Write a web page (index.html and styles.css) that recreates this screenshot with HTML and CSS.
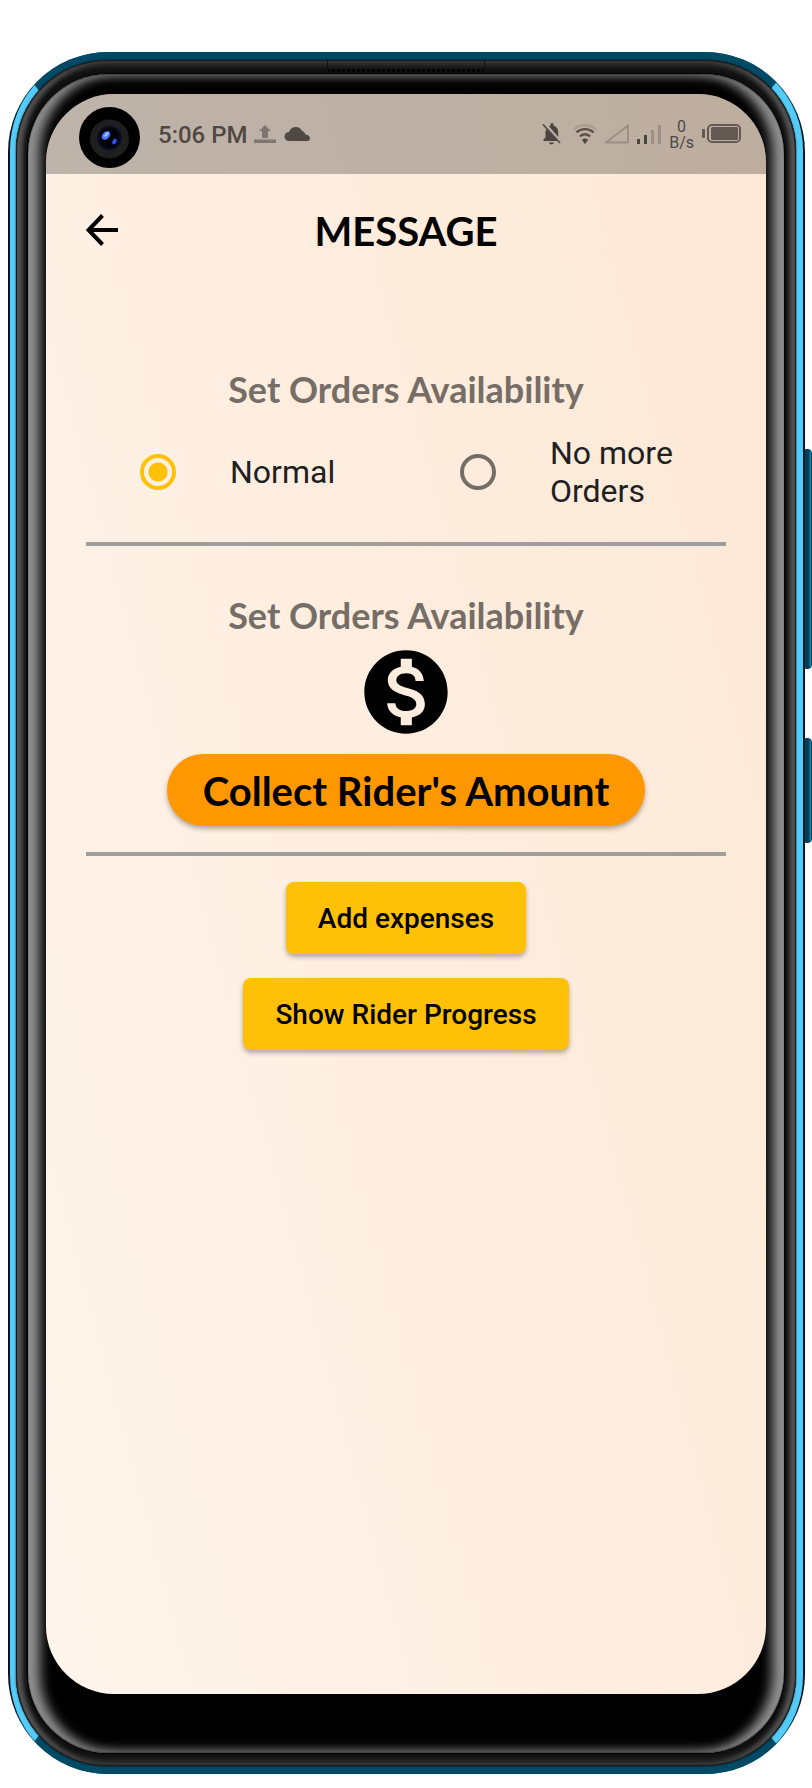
FILE: index.html
```html
<!DOCTYPE html>
<html lang="en">
<head>
<meta charset="utf-8">
<meta name="viewport" content="width=device-width, initial-scale=1">
<title>Message</title>
<link rel="stylesheet" href="styles.css">
</head>
<body>
<div class="phone">
  <span class="side-button volume"></span>
  <span class="side-button power"></span>
  <div class="rim">
  <div class="frame">
    <span class="speaker"></span>
    <div class="bezel">
      <div class="screen">
        <header class="status-bar">
          <svg class="camera" viewBox="0 0 61 61" aria-hidden="true">
            <defs>
              <radialGradient id="lens"><stop offset="0" stop-color="#000"/><stop offset=".7" stop-color="#020208"/><stop offset="1" stop-color="#10102c"/></radialGradient>
            </defs>
            <circle cx="30.500" cy="30.500" r="30.500" fill="#000"/>
            <circle cx="30.500" cy="32" r="19.500" fill="#1f1f1f"/>
            <circle cx="30.500" cy="31" r="12.500" fill="url(#lens)"/>
            <ellipse cx="27" cy="28.500" rx="3.500" ry="5" transform="rotate(45 27 28.500)" fill="#4878ff"/>
            <ellipse cx="27.500" cy="27.500" rx="1.500" ry="3" transform="rotate(45 27.500 27.500)" fill="#9dbcff"/>
            <ellipse cx="35.500" cy="34.500" rx="2" ry="3" transform="rotate(25 35.500 34.500)" fill="#2c50ee"/>
          </svg>
          <span class="time">5:06 PM</span>
          <svg class="upload" width="22" height="18" viewBox="0 0 22 18" aria-hidden="true"><path d="M11 0l6 6h-3v7H8V6H5zM0 14.500h22V18H0z" fill="#81766f"/></svg>
          <svg class="cloud" width="26" height="14" viewBox="0 0 26 14" aria-hidden="true"><path d="M5 14a4.500 4.500 0 0 1 0-9 7 7 0 0 1 13-1c2 .3 3 2 3.500 3.500 3 .2 4.500 2 4.500 4 0 1.500-1 2.500-2.500 2.500z" fill="#504843"/></svg>
          <div class="indicators">
            <svg width="20" height="22" viewBox="0 0 20 22" aria-hidden="true"><path d="M1.500 18v-1.500l2-2V9c0-1 .2-2 .7-3L15.500 18zM7 3.300l1.500-.8V1.500a1.500 1.500 0 0 1 3 0v1c3 .8 4.700 3.500 4.700 6.500v5zM7 19.500h5c-.3 2.500-4.700 2.500-5 0z" fill="#4b443f"/><path d="M1 1.500L18 20" stroke="#4b443f" stroke-width="1.600"/></svg>
            <svg class="wifi" width="24" height="20" viewBox="0 0 24 20" fill="none" aria-hidden="true"><path d="M1 5.500C7-.2 17-.2 23 5.500" stroke="#a99d92" stroke-width="2.400"/><path d="M3.500 8.500c4.500-4.500 12.500-4.500 17 0M7 12.500c2.500-3 7.500-3 10 0" stroke="#594f49" stroke-width="2.400"/><path d="M9 16c1.500-2 4.500-2 6 0l-3 4z" fill="#4b443f"/></svg>
            <svg width="24" height="20" viewBox="0 0 24 20" aria-hidden="true"><path d="M1 18.500L23 1.500v17z" fill="none" stroke="#9d8f86" stroke-width="2"/></svg>
            <svg width="24" height="20" viewBox="0 0 24 20" aria-hidden="true"><path d="M0 15h3v5H0zM7 11h3v9H7z" fill="#4b443f"/><path d="M14 6h3v14h-3zM21 1h3v19h-3z" fill="#9d8f86"/></svg>
            <span class="speed">0<br>B/s</span>
            <svg width="39" height="20" viewBox="0 0 39 20" aria-hidden="true"><rect y="5" width="3" height="9" rx="1" fill="#655a53"/><rect x="6" y="1" width="32" height="17" rx="4" fill="none" stroke="#655a53" stroke-width="2"/><rect x="9" y="3" width="27" height="13" rx="1.500" fill="#655a53"/></svg>
          </div>
        </header>
        <nav class="app-bar">
          <button class="back" type="button" aria-label="Back">
            <svg width="32" height="32" viewBox="0 0 32 32" fill="none" stroke="#000" stroke-width="4" aria-hidden="true"><path d="M32 16H4M16.500 1.500L2.500 16l14 14.500"/></svg>
          </button>
          <h1>MESSAGE</h1>
        </nav>
        <main>
          <h2 id="availability">Set Orders Availability</h2>
          <div class="options" role="radiogroup" aria-labelledby="availability">
            <label class="option"><input type="radio" name="orders" checked><span>Normal</span></label>
            <label class="option"><input type="radio" name="orders"><span>No more Orders</span></label>
          </div>
          <hr>
          <h2 class="second">Set Orders Availability</h2>
          <svg class="money" width="100" height="100" viewBox="0 0 24 24" aria-hidden="true"><path d="M12 2C6.480 2 2 6.480 2 12s4.480 10 10 10 10-4.480 10-10S17.520 2 12 2zm1.410 16.090V20h-2.670v-1.930c-1.710-.36-3.160-1.460-3.270-3.400h1.960c.1 1.050.82 1.870 2.650 1.870 1.960 0 2.400-.98 2.400-1.590 0-.83-.44-1.610-2.670-2.140-2.480-.6-4.180-1.620-4.180-3.670 0-1.720 1.390-2.840 3.110-3.210V4h2.670v1.950c1.860.45 2.790 1.860 2.850 3.390H14.300c-.05-1.110-.64-1.870-2.220-1.870-1.500 0-2.400.68-2.400 1.640 0 .84.65 1.390 2.670 1.910s4.180 1.390 4.180 3.910c-.01 1.830-1.380 2.830-3.120 3.160z"/></svg>
          <button class="btn pill" type="button">Collect Rider's Amount</button>
          <hr>
          <button class="btn" type="button">Add expenses</button>
          <button class="btn" type="button">Show Rider Progress</button>
        </main>
      </div>
    </div>
  </div>
  </div>
</div>
</body>
</html>
```
FILE: styles.css
```css
* {
  box-sizing: border-box;
}

body {
  margin: 0;
  min-height: 100vh;
  padding: 52px 7px 14px 8px;
  display: flex;
  background: #fff;
  font-family: Roboto, "Liberation Sans", sans-serif;
}

/* Device shell: metallic rim, dark frame, glossy bezel */
.phone {
  position: relative;
  flex: 1;
  display: flex;
  padding: 0 2px;
  border-radius: 100px;
  background: linear-gradient(#004a66 0 30px, #001622 70px calc(100% - 70px), #004a66 calc(100% - 30px));
}

.rim {
  flex: 1;
  display: flex;
  border: 8px solid #54ccf9;
  border-width: 8px 7px 8px 6px;
  border-top-color: #004a66;
  border-bottom-color: #004a66;
  border-radius: 98px;
  background: #000;
}

.frame {
  position: relative;
  flex: 1;
  display: flex;
  padding: 14px 12px 13px;
  border-radius: 91px;
  background: #111;
  box-shadow:
    0 0 2px #000,
    inset 0 0 1px 1px #151515,
    inset 7px 0 5px -1px #555,
    inset -7px 0 5px -1px #555,
    inset 0 0 4px 6px #303030;
}

.bezel {
  flex: 1;
  display: flex;
  padding: 20px 18px 59px;
  border-radius: 80px;
  background: #000;
  box-shadow:
    0 0 1px 1px #000,
    inset 0 1px 1px #444,
    inset 0 -1px 1px #444,
    inset 15px 0 12px -3px #909090,
    inset -15px 0 12px -3px #909090,
    inset 0 6px 12px -2px #333,
    inset 0 -6px 12px -2px #444;
}

.screen {
  flex: 1;
  display: flex;
  flex-direction: column;
  overflow: hidden;
  border-radius: 68px;
  background: linear-gradient(75deg, #fef5ec, #feeee0 50%, #fce8d5);
}

.side-button {
  position: absolute;
  left: 100%;
  width: 7px;
  border-radius: 0 4px 4px 0;
  border: 1px solid #00415c;
  background: linear-gradient(to right, #003e57 0 3px, #1483ab 4px);
}

.volume {
  top: 397px;
  height: 220px;
}

.power {
  top: 686px;
  height: 105px;
}

.speaker {
  position: absolute;
  top: 1px;
  left: 50%;
  width: 158px;
  height: 12px;
  transform: translateX(-50%);
  border: 1px solid #111;
  border-width: 0 1px;
  background: radial-gradient(circle, #000 0 1px, transparent 2px) 3px 7px / 5px 5px repeat-x;
}

/* Status bar */
.status-bar {
  height: 80px;
  padding: 0 25px 0 33px;
  display: flex;
  align-items: center;
  background: rgba(0, 0, 0, 0.25);
  color: #504843;
}

.camera {
  width: 61px;
  height: 61px;
  margin: 7px 18px 0 0;
}

.time {
  padding-top: 2px;
  font-size: 24px;
  font-weight: 500;
  line-height: 32px;
}

.upload {
  margin-left: 6px;
}

.cloud {
  margin-left: 8px;
}

.indicators {
  margin-left: auto;
  display: flex;
  align-items: center;
  gap: 8px;
}

.wifi {
  margin: 0 0 0 3px;
}

.speed {
  padding-top: 1px;
  font-size: 16px;
  line-height: 16px;
  text-align: center;
}

/* App bar */
.app-bar {
  height: 112px;
  padding: 0 40px;
  display: grid;
  grid-template-columns: 32px 1fr 32px;
  align-items: center;
}

.back {
  display: flex;
  padding: 0;
  border: 0;
  background: none;
  cursor: pointer;
}

h1 {
  margin: 0;
  padding-top: 2px;
  text-align: center;
  font: bold 40px/48px Lato, sans-serif;
  color: #000;
}

/* Content */
main {
  padding: 80px 40px;
  display: flex;
  flex-direction: column;
  align-items: center;
}

h2 {
  margin: 0 0 4px;
  font: bold 36px/46px Lato, sans-serif;
  color: #766e66;
}

.second {
  margin-top: 32px;
}

.options {
  width: 100%;
  min-height: 112px;
  display: grid;
  grid-template-columns: 1fr 1fr;
}

.option {
  display: flex;
  align-items: center;
  gap: 54px;
  padding: 0 32px 0 54px;
  font-size: 32px;
  line-height: 38px;
  color: #21201e;
}

.option input {
  appearance: none;
  flex: none;
  width: 36px;
  height: 36px;
  margin: 0;
  border: 4px solid #766e66;
  border-radius: 50%;
}

.option input:checked {
  border-color: #ffc107;
  background: radial-gradient(circle, #ffc107 0 9px, transparent 10px);
}

hr {
  width: 100%;
  height: 4px;
  margin: 14px 0;
  border: 0;
  background: #9e9e9e;
}

.btn {
  min-height: 72px;
  margin: 12px 0;
  padding: 2px 32px 0;
  border: 0;
  border-radius: 8px;
  background: #ffc107;
  box-shadow: 0 3px 5px rgba(0, 0, 0, 0.3);
  font: 500 28px/34px Roboto, sans-serif;
  color: #000;
  cursor: pointer;
}

.pill {
  padding: 2px 36px 0;
  border-radius: 36px;
  background: #ff9800;
  font: bold 40px/48px Lato, sans-serif;
}
```
